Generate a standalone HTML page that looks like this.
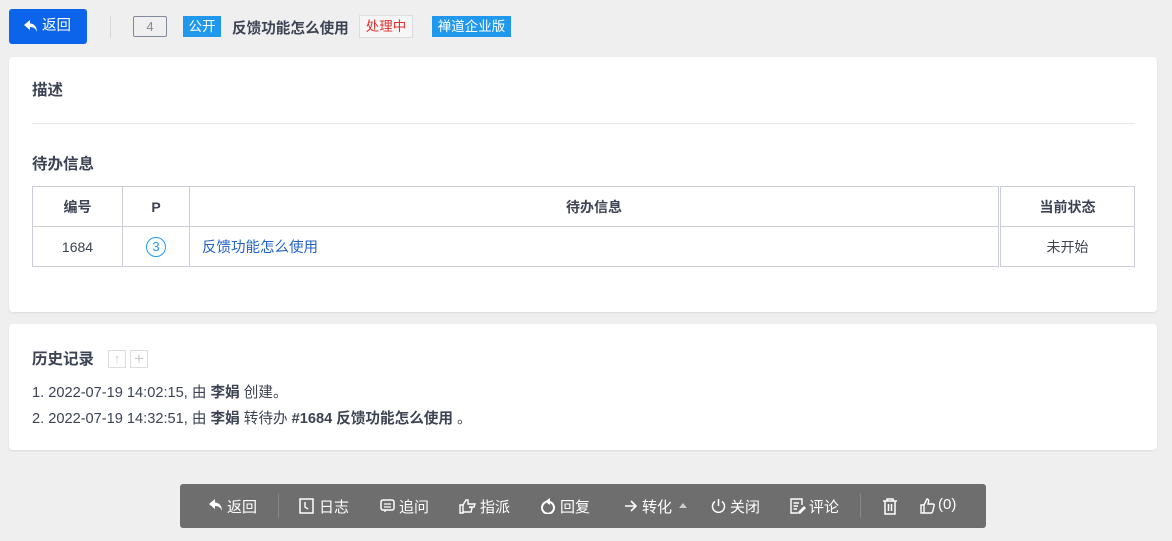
<!DOCTYPE html>
<html><head><meta charset="utf-8"><style>
*{margin:0;padding:0;box-sizing:border-box}
body{width:1172px;height:541px;background:#efefef;font-family:"Liberation Sans","Noto Sans CJK SC",sans-serif;font-size:14px;color:#3c4353;position:relative;overflow:hidden}
.a{position:absolute;white-space:nowrap}
.card{position:absolute;background:#fff;border-radius:4px;box-shadow:0 1px 2px rgba(0,0,0,.08)}
table{position:absolute;left:32px;top:186px;width:1103px;border-collapse:collapse}
td,th{border:1px solid #cbcdd9;height:40px;text-align:center;font-size:14px}
th{font-weight:bold;color:#3c4353}
td{color:#3c4353}
.tb{position:absolute;left:180px;top:484px;width:806px;height:44px;background:#6e6e6e;border-radius:3px}
.tb .a{color:#fff;font-size:15px;top:12px}
.tb svg{position:absolute}
</style></head><body>
<div class="a" style="left:9px;top:9px;width:78px;height:35px;background:#0c64eb;border-radius:3px;color:#fff;font-size:14.5px;line-height:35px;padding-left:16px">
<svg style="position:absolute;left:15px;top:11px" width="14" height="13" viewBox="0 0 14 13"><path d="M6 0 L0 5 L6 10 V7 C10 7 12 9 13 12 C13 7 10 3.5 6 3.5Z" fill="#fff"/></svg><span style="margin-left:17px">返回</span></div>
<div class="a" style="left:110px;top:16px;width:1px;height:22px;background:#d5d5d5"></div>
<div class="a" style="left:133px;top:16px;width:34px;height:21px;border:1px solid #838a9d;border-radius:2px;color:#838a9d;text-align:center;line-height:19px;font-size:13px">4</div>
<div class="a" style="left:183px;top:16px;width:38px;height:21px;background:#2098ee;color:#fff;text-align:center;line-height:21px;font-size:13.5px">公开</div>
<div class="a" style="left:232px;top:17px;font-weight:bold;font-size:14.6px;color:#3c4353">反馈功能怎么使用</div>
<div class="a" style="left:359px;top:15px;width:54px;height:23px;border:1px solid #ddd;color:#e43030;text-align:center;line-height:21px;font-size:13.5px;background:#f6f6f6">处理中</div>
<div class="a" style="left:432px;top:16px;width:79px;height:21px;background:#2098ee;color:#fff;text-align:center;line-height:21px;font-size:13.5px">禅道企业版</div>

<div class="card" style="left:9px;top:57px;width:1148px;height:255px"></div>
<div class="a" style="left:32px;top:78px;font-size:15.5px;font-weight:bold">描述</div>
<div class="a" style="left:32px;top:123px;width:1103px;height:1px;background:#e8e8e8"></div>
<div class="a" style="left:32px;top:152px;font-size:15.5px;font-weight:bold">待办信息</div>
<table>
<tr><th style="width:90px">编号</th><th style="width:67px">P</th><th style="width:810px;border-right:3px double #cbcdd9">待办信息</th><th>当前状态</th></tr>
<tr><td>1684</td><td><span style="display:inline-block;width:20px;height:20px;border:1px solid #2098ee;border-radius:50%;color:#2098ee;line-height:18px;font-size:13px">3</span></td><td style="text-align:left;padding-left:12px;color:#2463c8;font-size:14.5px;border-right:3px double #cbcdd9">反馈功能怎么使用</td><td>未开始</td></tr>
</table>

<div class="card" style="left:9px;top:324px;width:1148px;height:126px"></div>
<div class="a" style="left:32px;top:347px;font-size:15.5px;font-weight:bold">历史记录</div>
<div class="a" style="left:108px;top:350px;width:18px;height:18px;border:1px solid #ddd;color:#ccc;text-align:center;line-height:16px;font-size:13px">↑</div>
<div class="a" style="left:130px;top:350px;width:18px;height:18px;border:1px solid #ddd;color:#ccc;text-align:center;line-height:15px;font-size:17px">+</div>
<div class="a" style="left:32px;top:381px;font-size:14.6px">1. 2022-07-19 14:02:15, 由 <b>李娟</b> 创建。</div>
<div class="a" style="left:32px;top:407px;font-size:14.6px">2. 2022-07-19 14:32:51, 由 <b>李娟</b> 转待办 <b>#1684 反馈功能怎么使用</b> 。</div>

<div class="tb">
<svg style="left:29px;top:15px" width="14" height="13" viewBox="0 0 14 13"><path d="M6 0 L0 5 L6 10 V7 C10 7 12 9 13 12 C13 7 10 3.5 6 3.5Z" fill="#fff"/></svg>
<div class="a" style="left:47px">返回</div>
<div class="a" style="left:98px;top:10px;width:1px;height:24px;background:#888"></div>
<svg style="left:119px;top:14px" width="15" height="16" viewBox="0 0 15 16"><rect x="1" y="1" width="13" height="14" fill="none" stroke="#fff" stroke-width="1.5"/><path d="M6 4V9L9 11" stroke="#fff" stroke-width="1.4" fill="none"/></svg>
<div class="a" style="left:139px">日志</div>
<svg style="left:200px;top:15px" width="15" height="14" viewBox="0 0 15 14"><rect x="1" y="1" width="13" height="10" rx="2" fill="none" stroke="#fff" stroke-width="1.5"/><path d="M4 5H11M4 8H11M5 11L5 13" stroke="#fff" stroke-width="1.3"/></svg>
<div class="a" style="left:219px">追问</div>
<svg style="left:279px;top:14px" width="18" height="16" viewBox="0 0 18 16"><path d="M1 7H4V15H1ZM4 7L7 2H9V6H16L15 9H10L13 10L12 14H4" fill="none" stroke="#fff" stroke-width="1.4"/></svg>
<div class="a" style="left:300px">指派</div>
<svg style="left:361px;top:14px" width="15" height="16" viewBox="0 0 15 16"><path d="M5 4A6 6 0 1 0 9 4" fill="none" stroke="#fff" stroke-width="2"/><path d="M9 0V7L4 3.5Z" fill="#fff"/></svg>
<div class="a" style="left:380px">回复</div>
<svg style="left:444px;top:16px" width="14" height="12" viewBox="0 0 14 12"><path d="M1 6H12M7 1L12 6L7 11" fill="none" stroke="#fff" stroke-width="1.6"/></svg>
<div class="a" style="left:462px">转化</div>
<svg style="left:499px;top:19px" width="8" height="5" viewBox="0 0 8 5"><path d="M0 5L4 0L8 5Z" fill="#ccc"/></svg>
<svg style="left:531px;top:14px" width="15" height="16" viewBox="0 0 15 16"><path d="M4 3.5A6 6 0 1 0 11 3.5M7.5 1V8" fill="none" stroke="#fff" stroke-width="1.5"/></svg>
<div class="a" style="left:550px">关闭</div>
<svg style="left:610px;top:14px" width="16" height="16" viewBox="0 0 16 16"><path d="M12 7V1H1V15H8M3.5 5H9M3.5 8H8M3.5 11H7M9 14L14 9L15 10L10 15H9Z" fill="none" stroke="#fff" stroke-width="1.4"/></svg>
<div class="a" style="left:629px">评论</div>
<div class="a" style="left:680px;top:10px;width:1px;height:24px;background:#888"></div>
<svg style="left:702px;top:14px" width="16" height="17" viewBox="0 0 16 17"><path d="M1 3H15M5 3V1H11V3M3 3V16H13V3M6.5 6V13M9.5 6V13" fill="none" stroke="#fff" stroke-width="1.5"/></svg>
<svg style="left:740px;top:14px" width="15" height="16" viewBox="0 0 15 16"><path d="M1 7H4V15H1ZM4 7L7 1C8 1 9 2 8.5 4L8 6H13C14 6 14.5 7 14 8L12.5 14C12 15 11.5 15 11 15H4" fill="none" stroke="#fff" stroke-width="1.4"/></svg>
<div class="a" style="left:758px">(0)</div>
</div>
</body></html>
